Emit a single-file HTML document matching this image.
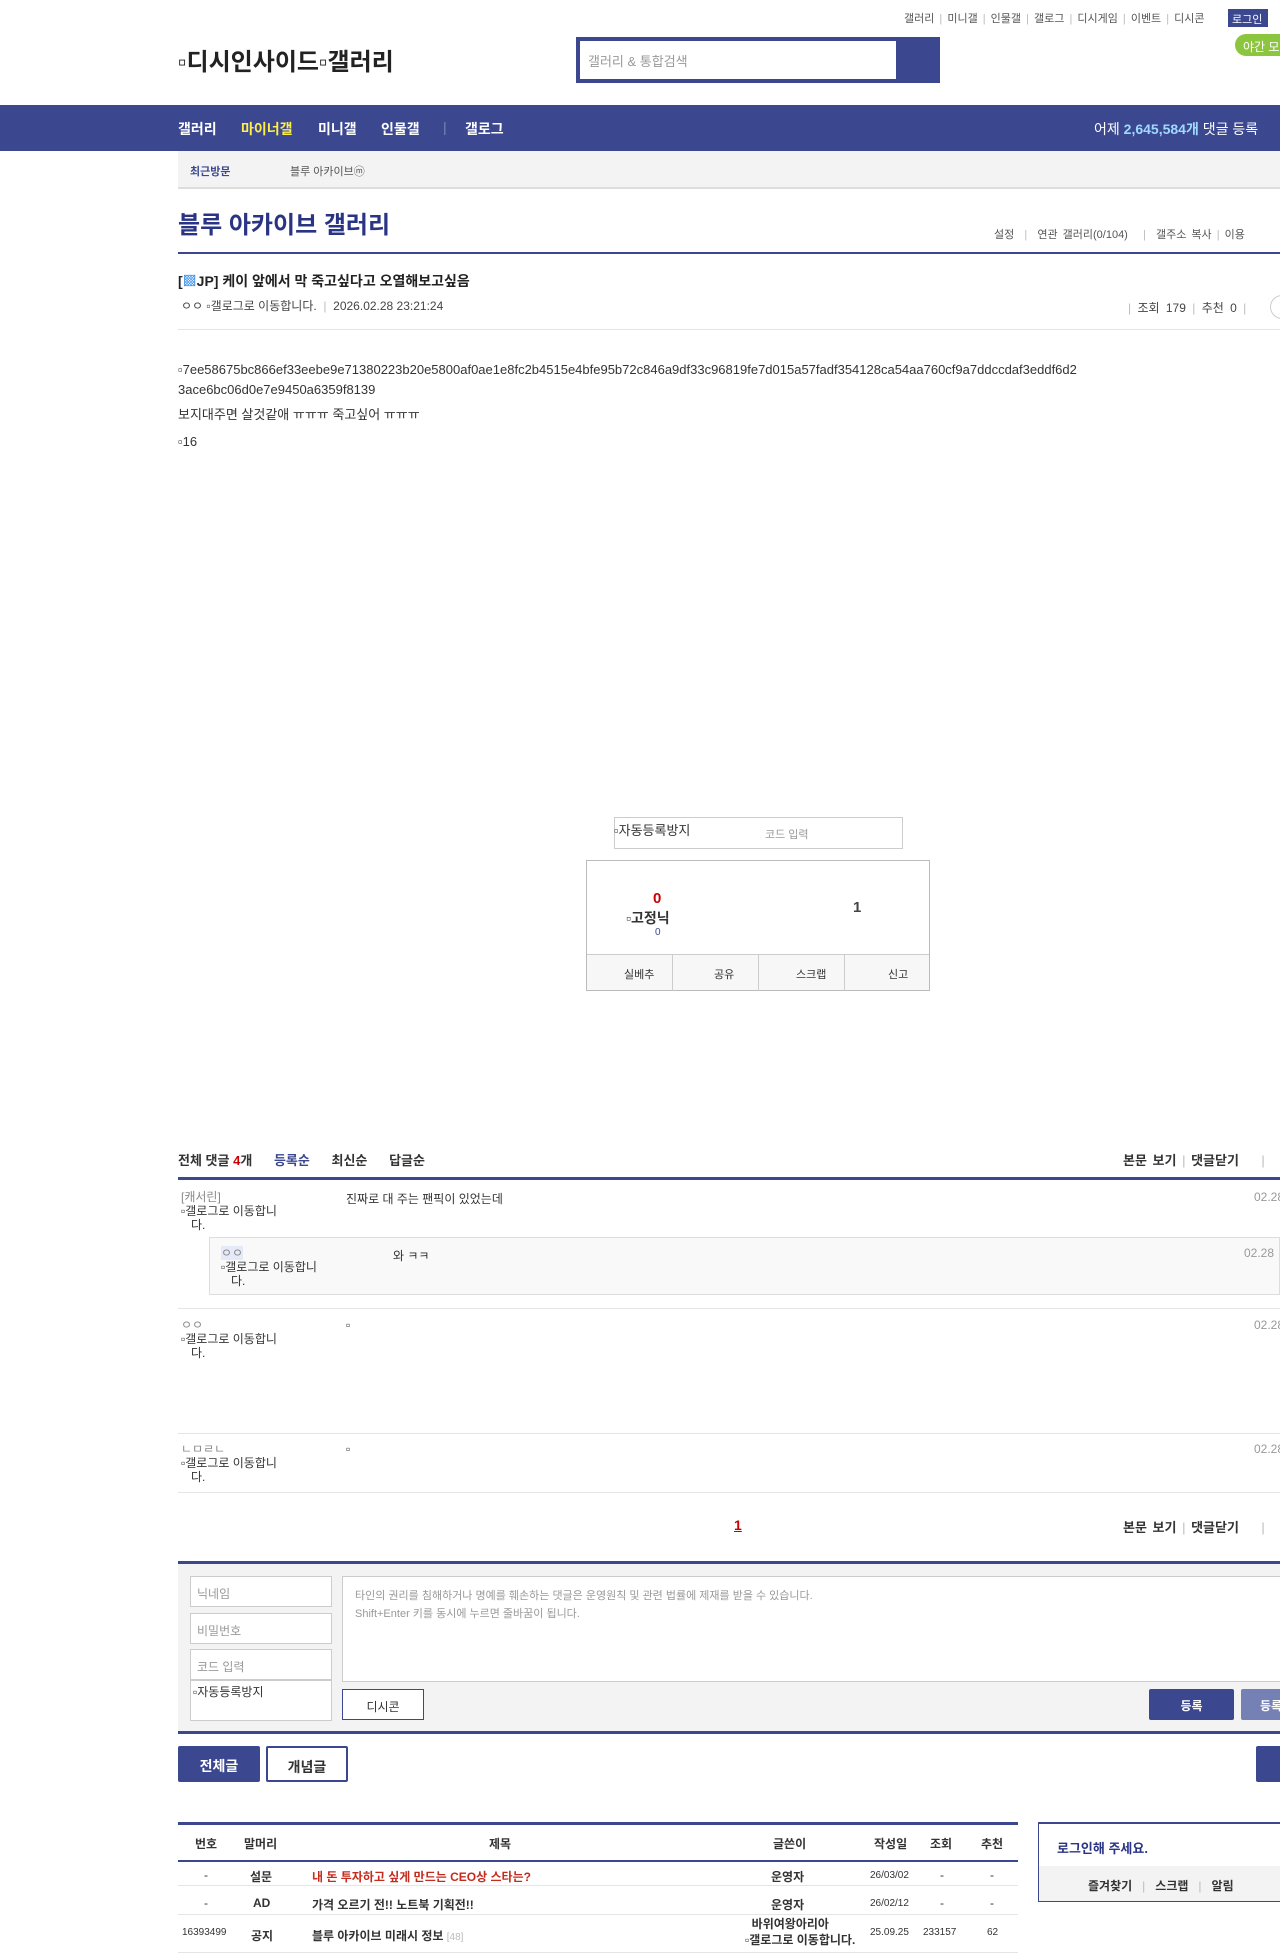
<!DOCTYPE html>
<html><head><meta charset="utf-8"><style>
*{margin:0;padding:0;box-sizing:border-box}
body{width:1280px;height:1958px;overflow:hidden;position:relative;background:#fff;font-family:"Liberation Sans","Noto Sans CJK KR",sans-serif;font-size:12px;color:#333}
.a{position:absolute;white-space:nowrap}
.nav{background:#3b4890;left:0;top:105px;width:1280px;height:46px}
.nav span{color:#fff;font-weight:bold;font-size:14px;position:absolute;top:14px}
.line{position:absolute;height:2px;background:#3b4890}
.hl{position:absolute;height:1px;background:#e5e5e5}
.g{color:#bbb}
.box{position:absolute;border:1px solid #ccc;background:#fff}
.btn{position:absolute;background:#3b4890;color:#fff;font-weight:bold;text-align:center;border-radius:2px}
</style></head><body>
<div class="a" style="top:10px;left:904px;font-size:11px;color:#555;word-spacing:2px">갤러리 <span class="g">|</span> 미니갤 <span class="g">|</span> 인물갤 <span class="g">|</span> 갤로그 <span class="g">|</span> 디시게임 <span class="g">|</span> 이벤트 <span class="g">|</span> 디시콘</div>
<div class="a" style="top:9px;left:1228px;width:40px;height:18px;background:#3b4890;color:#fff;font-size:11px;padding:2px 4px">로그인</div>
<div class="a" style="top:34px;left:1235px;width:60px;height:22px;background:#8cc63f;border-radius:11px;color:#fff;font-size:12px;padding:4px 8px">야간 모</div>
<div class="a" style="top:42px;left:178px;font-size:24px;font-weight:bold;color:#222">▫디시인사이드▫갤러리</div>
<div class="a" style="top:37px;left:576px;width:364px;height:46px;background:#3b4890"></div>
<div class="a" style="top:41px;left:580px;width:316px;height:38px;background:#fff;color:#999;font-size:13px;padding:10px 8px">갤러리 &amp; 통합검색</div>
<div class="a nav"><span style="left:178px">갤러리</span><span style="left:241px;color:#ffed4a">마이너갤</span><span style="left:318px">미니갤</span><span style="left:381px">인물갤</span><span style="left:443px;color:#7a84b8;font-weight:normal">|</span><span style="left:465px">갤로그</span><span style="left:1094px;font-weight:normal">어제 <b style="color:#9fd9ff">2,645,584개</b> 댓글 등록</span></div>
<div class="a" style="top:151px;left:178px;width:1102px;height:38px;background:#f3f3f3;border-bottom:2px solid #ddd"></div>
<div class="a" style="top:163px;left:190px;font-size:11px;font-weight:bold;color:#3b4890">최근방문</div>
<div class="a" style="top:163px;left:290px;font-size:11px;color:#555">블루 아카이브ⓜ</div>
<div class="a" style="top:205px;left:178px;font-size:24px;font-weight:bold;color:#2a3484">블루 아카이브 갤러리</div>
<div class="a" style="top:226px;left:994px;font-size:11px;color:#555;word-spacing:2px">설정 <span class="g">&nbsp;|&nbsp;</span> 연관 갤러리(0/104) <span class="g">&nbsp;&nbsp;|&nbsp;</span> 갤주소 복사 <span class="g">|</span> 이용</div>
<div class="line" style="top:252px;left:178px;width:1102px"></div>
<div class="a" style="top:271px;left:178px;font-size:14px;font-weight:bold;color:#222">[<span style="color:#3a8ee6">▩</span>JP] 케이 앞에서 막 죽고싶다고 오열해보고싶음</div>
<div class="a" style="top:297px;left:181px;font-size:12px;color:#444">ㅇㅇ ▫갤로그로 이동합니다. <span class="g">&nbsp;|&nbsp;</span> 2026.02.28 23:21:24</div>
<div class="a" style="top:299px;left:1128px;font-size:12px;color:#444;word-spacing:3px"><span class="g">|</span> 조회 179 <span class="g">|</span> 추천 0 <span class="g">|</span></div>
<div class="a" style="top:295px;left:1270px;width:24px;height:24px;border:1px solid #ccc;border-radius:12px"></div>
<div class="hl" style="top:329px;left:178px;width:1102px"></div>
<div class="a" style="top:360px;left:178px;font-size:13px;color:#333;line-height:20px;white-space:normal;width:900px;word-break:break-all">▫7ee58675bc866ef33eebe9e71380223b20e5800af0ae1e8fc2b4515e4bfe95b72c846a9df33c96819fe7d015a57fadf354128ca54aa760cf9a7ddccdaf3eddf6d23ace6bc06d0e7e9450a6359f8139</div>
<div class="a" style="top:404px;left:178px;font-size:13px">보지대주면 살것같애 ㅠㅠㅠ 죽고싶어 ㅠㅠㅠ</div>
<div class="a" style="top:434px;left:178px;font-size:13px">▫16</div>
<div class="box" style="top:817px;left:614px;width:289px;height:32px"></div>
<div class="a" style="top:820px;left:614px;font-size:13px">▫자동등록방지</div>
<div class="a" style="top:826px;left:765px;font-size:11px;color:#999">코드 입력</div>
<div class="box" style="top:860px;left:586px;width:344px;height:131px;border-color:#bbb"></div>
<div class="a" style="top:890px;left:653px;font-size:15px;font-weight:bold;color:#c00">0</div>
<div class="a" style="top:908px;left:626px;font-size:14px;font-weight:bold">▫고정닉</div>
<div class="a" style="top:927px;left:655px;font-size:10px;color:#3b4890">0</div>
<div class="a" style="top:899px;left:853px;font-size:15px;font-weight:bold;color:#444">1</div>
<div class="a" style="top:954px;left:587px;width:342px;height:36px;border-top:1px solid #ccc;background:#f7f7f7"></div>
<div class="a" style="top:966px;left:624px;font-size:11px">실베추</div>
<div class="a" style="top:966px;left:714px;font-size:11px">공유</div>
<div class="a" style="top:966px;left:796px;font-size:11px">스크랩</div>
<div class="a" style="top:966px;left:888px;font-size:11px">신고</div>
<div class="a" style="top:955px;left:672px;width:1px;height:36px;background:#ccc"></div>
<div class="a" style="top:955px;left:758px;width:1px;height:36px;background:#ccc"></div>
<div class="a" style="top:955px;left:844px;width:1px;height:36px;background:#ccc"></div>
<div class="a" style="top:1150px;left:178px;font-size:13px;font-weight:bold;color:#333">전체 댓글 <span style="color:#c00">4</span>개 &nbsp;&nbsp;&nbsp;&nbsp; <span style="color:#3b4890">등록순</span> &nbsp;&nbsp;&nbsp;&nbsp; 최신순 &nbsp;&nbsp;&nbsp;&nbsp; 답글순</div>
<div class="a" style="top:1150px;left:1123px;font-size:13px;font-weight:bold;word-spacing:2px">본문 보기 <span class="g" style="font-weight:normal">|</span> 댓글닫기 &nbsp;&nbsp;&nbsp;<span class="g" style="font-weight:normal">|</span></div>
<div class="line" style="top:1177px;left:178px;width:1102px;height:3px"></div>
<div class="a" style="top:1190px;left:181px;font-size:12px;line-height:14px;color:#888">[캐서린]<br><span style="color:#333">▫갤로그로 이동합니<br>&nbsp;&nbsp;&nbsp;다.</span></div>
<div class="a" style="top:1190px;left:346px;font-size:12px">진짜로 대 주는 팬픽이 있었는데</div>
<div class="a" style="top:1190px;left:1254px;font-size:12px;color:#999">02.28</div>
<div class="a" style="top:1237px;left:209px;width:1071px;height:58px;background:#f9f9f9;border:1px solid #ddd"></div>
<div class="a" style="top:1246px;left:221px;font-size:12px;line-height:14px;color:#888"><span style="background:#e6eaf8">ㅇㅇ</span><br><span style="color:#333">▫갤로그로 이동합니<br>&nbsp;&nbsp;&nbsp;다.</span></div>
<div class="a" style="top:1247px;left:393px;font-size:12px">와 ㅋㅋ</div>
<div class="a" style="top:1246px;left:1244px;font-size:12px;color:#999">02.28</div>
<div class="hl" style="top:1308px;left:178px;width:1102px"></div>
<div class="a" style="top:1318px;left:181px;font-size:12px;line-height:14px;color:#888">ㅇㅇ<br><span style="color:#333">▫갤로그로 이동합니<br>&nbsp;&nbsp;&nbsp;다.</span></div>
<div class="a" style="top:1318px;left:346px;font-size:12px">▫</div>
<div class="a" style="top:1318px;left:1254px;font-size:12px;color:#999">02.28</div>
<div class="hl" style="top:1433px;left:178px;width:1102px"></div>
<div class="a" style="top:1442px;left:181px;font-size:12px;line-height:14px;color:#888">ㄴㅁㄹㄴ<br><span style="color:#333">▫갤로그로 이동합니<br>&nbsp;&nbsp;&nbsp;다.</span></div>
<div class="a" style="top:1442px;left:346px;font-size:12px">▫</div>
<div class="a" style="top:1442px;left:1254px;font-size:12px;color:#999">02.28</div>
<div class="hl" style="top:1492px;left:178px;width:1102px"></div>
<div class="a" style="top:1517px;left:734px;font-size:14px;font-weight:bold;color:#c00;text-decoration:underline">1</div>
<div class="a" style="top:1517px;left:1123px;font-size:13px;font-weight:bold;word-spacing:2px">본문 보기 <span class="g" style="font-weight:normal">|</span> 댓글닫기 &nbsp;&nbsp;&nbsp;<span class="g" style="font-weight:normal">|</span></div>
<div class="line" style="top:1561px;left:178px;width:1102px;height:3px"></div>
<div class="a" style="top:1564px;left:178px;width:1102px;height:168px;background:#f3f3f3"></div>
<div class="box" style="top:1576px;left:190px;width:142px;height:31px;color:#999;padding:8px 6px;font-size:12px">닉네임</div>
<div class="box" style="top:1613px;left:190px;width:142px;height:31px;color:#999;padding:8px 6px;font-size:12px">비밀번호</div>
<div class="box" style="top:1649px;left:190px;width:142px;height:31px;color:#999;padding:8px 6px;font-size:12px">코드 입력</div>
<div class="box" style="top:1680px;left:190px;width:142px;height:41px;font-size:12px;padding:2px">▫자동등록방지</div>
<div class="box" style="top:1576px;left:342px;width:950px;height:106px;color:#999;font-size:11px;line-height:18px;padding:10px 12px">타인의 권리를 침해하거나 명예를 훼손하는 댓글은 운영원칙 및 관련 법률에 제재를 받을 수 있습니다.<br>Shift+Enter 키를 동시에 누르면 줄바꿈이 됩니다.</div>
<div class="box" style="top:1689px;left:342px;width:82px;height:31px;border-color:#3b4890;text-align:center;padding-top:8px;font-size:12px">디시콘</div>
<div class="btn" style="top:1689px;left:1149px;width:85px;height:31px;padding-top:8px;font-size:12px">등록</div>
<div class="btn" style="top:1689px;left:1241px;width:60px;height:31px;padding-top:8px;font-size:12px;background:#7580b5">등록</div>
<div class="line" style="top:1731px;left:178px;width:1102px;height:3px"></div>
<div class="btn" style="top:1746px;left:178px;width:82px;height:36px;padding-top:10px;font-size:14px">전체글</div>
<div class="box" style="top:1746px;left:266px;width:82px;height:36px;padding-top:9px;font-size:14px;text-align:center;font-weight:bold;border:2px solid #3b4890;border-radius:2px;color:#333">개념글</div>
<div class="btn" style="top:1746px;left:1256px;width:40px;height:36px"></div>
<div class="line" style="top:1822px;left:178px;width:840px;height:3px"></div>
<div class="a" style="top:1835px;left:0;width:1018px;font-size:12px;font-weight:bold">
<span class="a" style="left:195px">번호</span><span class="a" style="left:244px">말머리</span><span class="a" style="left:489px">제목</span><span class="a" style="left:773px">글쓴이</span><span class="a" style="left:874px">작성일</span><span class="a" style="left:930px">조회</span><span class="a" style="left:981px">추천</span></div>
<div class="line" style="top:1860px;left:178px;width:840px"></div>
<div class="a" style="top:1868px;left:178px;width:840px;font-size:12px">
<span class="a" style="left:26px">-</span><span class="a" style="left:72px;font-weight:bold">설문</span><span class="a" style="left:134px;font-weight:bold;color:#c42b1c">내 돈 투자하고 싶게 만드는 CEO상 스타는?</span><span class="a" style="left:593px;font-weight:bold">운영자</span><span class="a" style="left:692px;top:2px;font-size:10px">26/03/02</span><span class="a" style="left:762px">-</span><span class="a" style="left:812px">-</span></div>
<div class="hl" style="top:1885px;left:178px;width:840px"></div>
<div class="a" style="top:1896px;left:178px;width:840px;font-size:12px">
<span class="a" style="left:26px">-</span><span class="a" style="left:75px;font-weight:bold">AD</span><span class="a" style="left:134px;font-weight:bold">가격 오르기 전!! 노트북 기획전!!</span><span class="a" style="left:593px;font-weight:bold">운영자</span><span class="a" style="left:692px;top:2px;font-size:10px">26/02/12</span><span class="a" style="left:762px">-</span><span class="a" style="left:812px">-</span></div>
<div class="hl" style="top:1914px;left:178px;width:840px"></div>
<div class="a" style="top:1927px;left:178px;width:840px;font-size:12px">
<span class="a" style="left:4px;font-size:10px">16393499</span><span class="a" style="left:73px;font-weight:bold">공지</span><span class="a" style="left:134px;font-weight:bold">블루 아카이브 미래시 정보 <span class="g" style="font-weight:normal;font-size:10px">[48]</span></span><span class="a" style="left:567px;top:-11px;font-weight:bold;line-height:16px">&nbsp;&nbsp;바위여왕아리아<br>▫갤로그로 이동합니다.</span><span class="a" style="left:692px;font-size:10px">25.09.25</span><span class="a" style="left:745px;font-size:10px">233157</span><span class="a" style="left:809px;font-size:10px">62</span></div>
<div class="hl" style="top:1952px;left:178px;width:840px"></div>
<div class="a" style="top:1822px;left:1038px;width:260px;height:80px;border:1px solid #3b4890;border-top-width:2px"></div>
<div class="a" style="top:1838px;left:1057px;font-size:13px;font-weight:bold;color:#2a3484">로그인해 주세요.</div>
<div class="a" style="top:1866px;left:1039px;width:241px;height:35px;background:#f3f3f3"></div>
<div class="a" style="top:1877px;left:1088px;font-size:12px;font-weight:bold">즐겨찾기 <span class="g" style="font-weight:normal">&nbsp;&nbsp;|&nbsp;&nbsp;</span> 스크랩 <span class="g" style="font-weight:normal">&nbsp;&nbsp;|&nbsp;&nbsp;</span> 알림</div>
</body></html>
